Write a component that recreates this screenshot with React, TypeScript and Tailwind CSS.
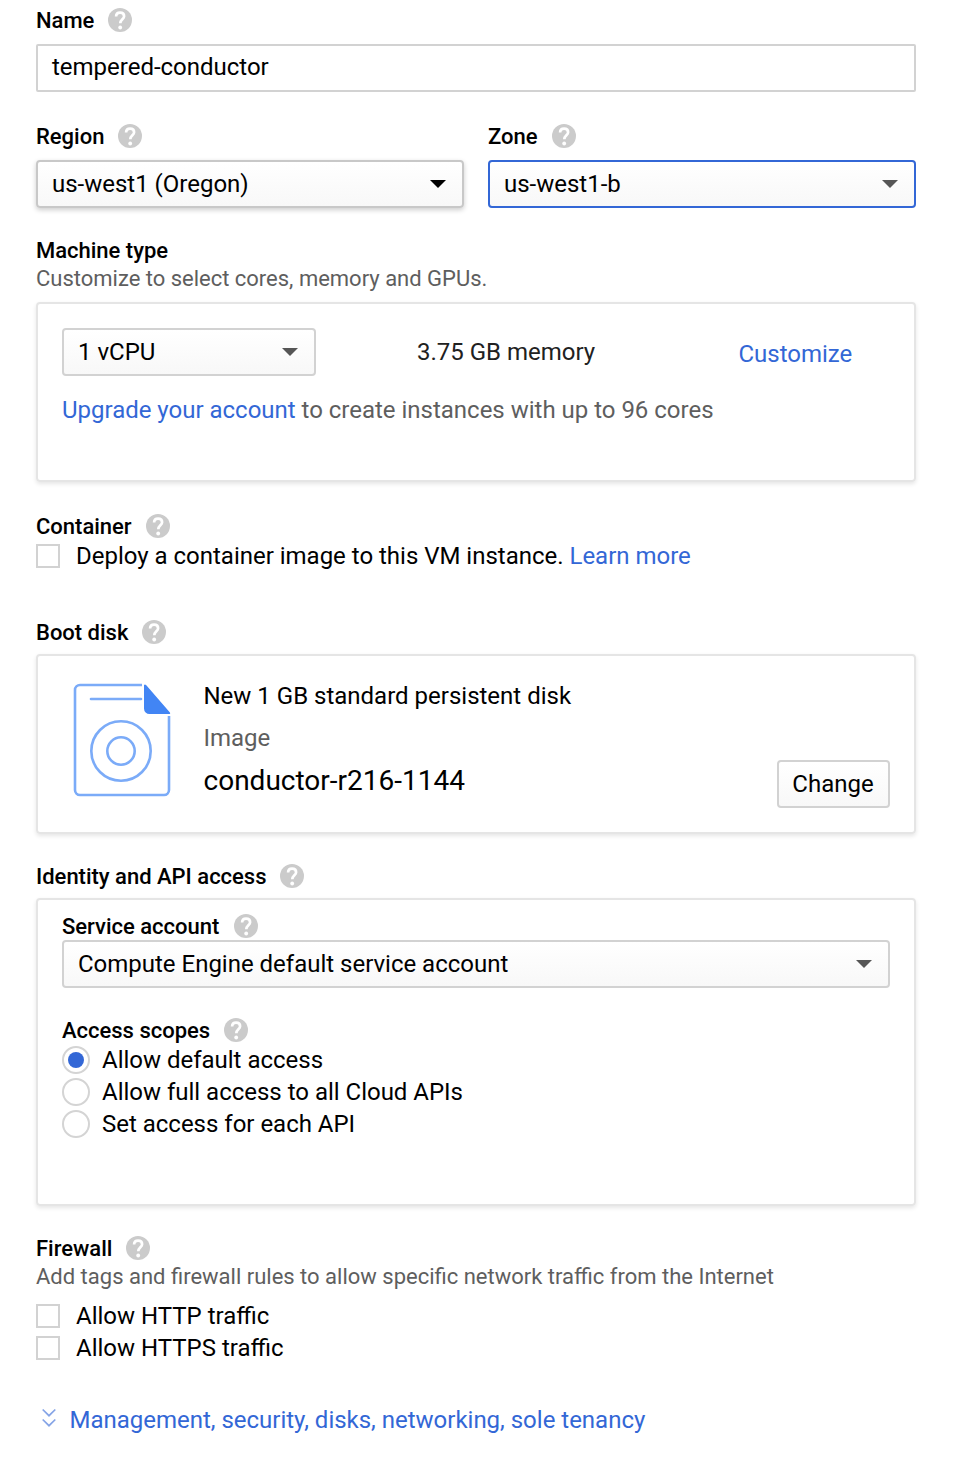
import React from "react";

function Help({ className = "ml-[14px]" }: { className?: string }) {
  return (
    <svg className={`h-6 w-6 shrink-0 ${className}`} viewBox="0 0 24 24">
      <circle cx="12" cy="12" r="12" fill="#cbcbcb" />
      <path d="M8.100 8.600C8.100 6.200 9.700 4.700 12.100 4.700s4 1.400 4 3.500c0 2.900-3.800 3.200-3.800 7" fill="none" stroke="#fff" strokeWidth="2.700" />
      <circle cx="12.200" cy="19.500" r="1.900" fill="#fff" />
    </svg>
  );
}

function Label({ children, help = true, className = "", helpClass }: { children: string; help?: boolean; className?: string; helpClass?: string }) {
  return (
    <div className={`flex h-7 items-center text-[22px] font-medium leading-[26px] ${className}`}>
      <span className="pt-[2px]">{children}</span>
      {help && <Help className={helpClass} />}
    </div>
  );
}

function Select({ children, className = "", arrow = "text-[#565656]" }: { children: string; className?: string; arrow?: string }) {
  return (
    <div className={`flex h-12 items-center justify-between rounded-[4px] border-2 bg-linear-to-b from-white to-[#f8f8f8] px-[14px] leading-7 ${className}`}>
      <span>{children}</span>
      <svg className={`mr-[2px] h-2 w-4 ${arrow}`} viewBox="0 0 16 8" fill="currentColor">
        <path d="M0 0h16L8 8z" />
      </svg>
    </div>
  );
}

function Card({ children, className = "" }: { children: React.ReactNode; className?: string }) {
  return (
    <div className={`rounded-[4px] border-2 border-[#e5e5e5] px-6 shadow-[0_2px_4px_rgba(0,0,0,0.1)] ${className}`}>
      {children}
    </div>
  );
}

function Check({ children }: { children: React.ReactNode }) {
  return (
    <div className="flex h-8 items-center">
      <span className="mr-4 h-6 w-6 shrink-0 border-2 border-[#d2d2d2] bg-white" />
      <span>{children}</span>
    </div>
  );
}

function Radio({ children, checked = false }: { children: string; checked?: boolean }) {
  return (
    <div className="flex h-8 items-center">
      <span className="mr-3 flex h-7 w-7 shrink-0 items-center justify-center rounded-full border-2 border-[#d4d4d4] bg-white">
        {checked && <span className="h-4 w-4 rounded-full bg-[#3367d6]" />}
      </span>
      <span>{children}</span>
    </div>
  );
}

function DiskImage() {
  return (
    <svg className="ml-[10px] mt-[26px] h-[116px] w-[100px] shrink-0" viewBox="0 0 100 116" fill="none" stroke="#7babf8" strokeWidth="2.600">
      <path d="M70 3H8a5 5 0 0 0-5 5v100a5 5 0 0 0 5 5h84a5 5 0 0 0 5-5V34" />
      <path d="M19 17h50" strokeLinecap="round" />
      <circle cx="49" cy="69" r="29.700" />
      <circle cx="49" cy="69" r="13.700" />
      <path d="M72 3v23.500a5.500 5.500 0 0 0 5.500 5.500H97q2 0 .7-1.800L74.300 3.300Q73 1.800 72 3z" fill="#4285f4" stroke="none" />
    </svg>
  );
}

export default function App() {
  return (
    <div className="h-[1460px] w-[972px] bg-white pl-9 pr-14 pt-[6px] font-['Roboto',sans-serif] text-[24px] leading-8 tracking-[-0.01px] text-black">
      <Label>Name</Label>
      <div className="mt-[10px] flex h-12 items-center rounded-[2px] border-2 border-[#d2d2d2] px-[14px] pb-[2px]">tempered-conductor</div>

      <div className="mt-[30px] grid grid-cols-2 gap-6">
        <div>
          <Label>Region</Label>
          <Select className="mt-[10px] border-[#c8c8c8] shadow-[0_2px_5px_rgba(0,0,0,0.2)]" arrow="text-black">us-west1 (Oregon)</Select>
        </div>
        <div>
          <Label>Zone</Label>
          <Select className="mt-[10px] border-[#3367d6]">us-west1-b</Select>
        </div>
      </div>

      <Label help={false} className="mt-7">Machine type</Label>
      <div className="h-7 pt-[2px] text-[22px] leading-[26px] text-[#5e5e5e]">Customize to select cores, memory and GPUs.</div>
      <Card className="mt-[10px] h-[180px] pt-6">
        <div className="flex h-12 items-center">
          <Select className="w-[254px] border-[#d2d2d2]">1 vCPU</Select>
          <span className="ml-[101px] w-[321.500px] text-[#212121]">3.75 GB memory</span>
          <span className="pt-1 text-[#3367d6]">Customize</span>
        </div>
        <div className="mt-[18px] text-[#5e5e5e]">
          <span className="text-[#3367d6]">Upgrade your account</span> to create instances with up to 96 cores
        </div>
      </Card>

      <Label className="mt-[30px]">Container</Label>
      <Check>
        Deploy a container image to this VM instance. <span className="text-[#3367d6]">Learn more</span>
      </Check>

      <Label className="mt-[46px]">Boot disk</Label>
      <Card className="mt-2 flex h-[180px]">
        <DiskImage />
        <div className="ml-[31.500px] flex-1 pt-6">
          <div className="tracking-normal">New 1 GB standard persistent disk</div>
          <div className="mt-[10px] text-[#5e5e5e]">Image</div>
          <div className="mt-[11px] text-[28px] tracking-normal">conductor-r216-1144</div>
        </div>
        <div className="mt-[104px] flex h-12 w-[113px] items-center justify-center rounded-[4px] border-2 border-[#d2d2d2] bg-linear-to-b from-white to-[#f8f8f8] pr-px">Change</div>
      </Card>

      <Label className="mt-7">Identity and API access</Label>
      <Card className="mt-2 h-[308px] pt-3">
        <Label helpClass="ml-[15px]">Service account</Label>
        <Select className="border-[#d2d2d2]">Compute Engine default service account</Select>
        <Label className="mt-7">Access scopes</Label>
        <Radio checked>Allow default access</Radio>
        <Radio>Allow full access to all Cloud APIs</Radio>
        <Radio>Set access for each API</Radio>
      </Card>

      <Label className="mt-7">Firewall</Label>
      <div className="h-7 pt-[2px] text-[22px] leading-[26px] tracking-normal text-[#5e5e5e]">Add tags and firewall rules to allow specific network traffic from the Internet</div>
      <div className="mt-[10px] tracking-normal">
        <Check>Allow HTTP traffic</Check>
        <Check>Allow HTTPS traffic</Check>
      </div>

      <div className="mt-10 flex h-8 items-center text-[#3367d6]">
        <svg className="-mt-[4px] ml-[6px] mr-[13.500px] h-[20px] w-[14px]" viewBox="0 0 14 20" fill="none" stroke="#85a4e6" strokeWidth="1.700">
          <path d="M.7 1.500 7 7.700l6.300-6.200M.7 11.500 7 17.700l6.300-6.200" />
        </svg>
        <span>Management, security, disks, networking, sole tenancy</span>
      </div>
    </div>
  );
}
